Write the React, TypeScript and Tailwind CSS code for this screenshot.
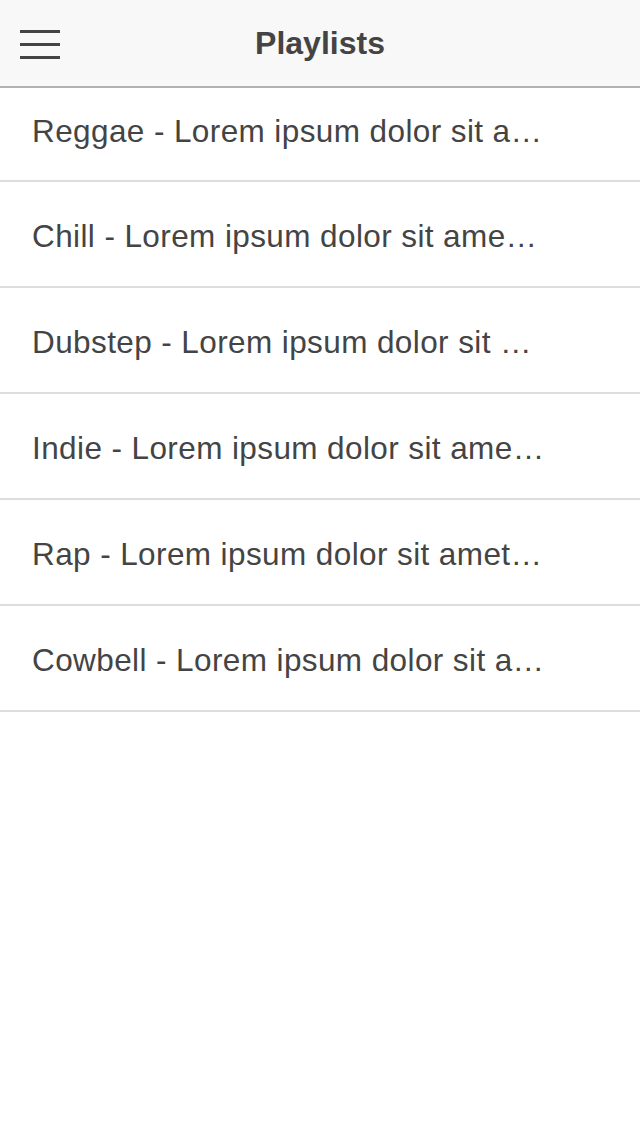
import React from 'react';

// visible labels, as the list shows them (already clipped by the list item)
const playlists = [
  'Reggae - Lorem ipsum dolor sit a…',
  'Chill - Lorem ipsum dolor sit ame…',
  'Dubstep - Lorem ipsum dolor sit …',
  'Indie - Lorem ipsum dolor sit ame…',
  'Rap - Lorem ipsum dolor sit amet…',
  'Cowbell - Lorem ipsum dolor sit a…',
];

export default function App() {
  return (
    <div className="min-h-[1136px] bg-white font-['Liberation_Sans',Arial,sans-serif] text-[#444]">
      <header className="relative flex h-[88px] items-center justify-center border-b-2 border-[#b2b2b2] bg-[#f8f8f8]">
        <button className="absolute left-[20px] top-[30px] flex w-[40px] flex-col gap-[10px]">
          <span className="h-[3px] w-full bg-[#444]" />
          <span className="h-[3px] w-full bg-[#444]" />
          <span className="h-[3px] w-full bg-[#444]" />
        </button>
        <h1 className="text-[32px] font-semibold">Playlists</h1>
      </header>
      <ul>
        {playlists.map((p, i) => (
          <li
            key={p}
            className={`flex items-center border-b-2 border-[#ddd] pl-[32px] pr-[40px] ${i === 0 ? 'h-[94px] pb-[4px]' : 'h-[106px] pt-[6px]'}`}
          >
            <span className="whitespace-nowrap text-[31.5px] tracking-[0.4px]">{p}</span>
          </li>
        ))}
      </ul>
    </div>
  );
}
